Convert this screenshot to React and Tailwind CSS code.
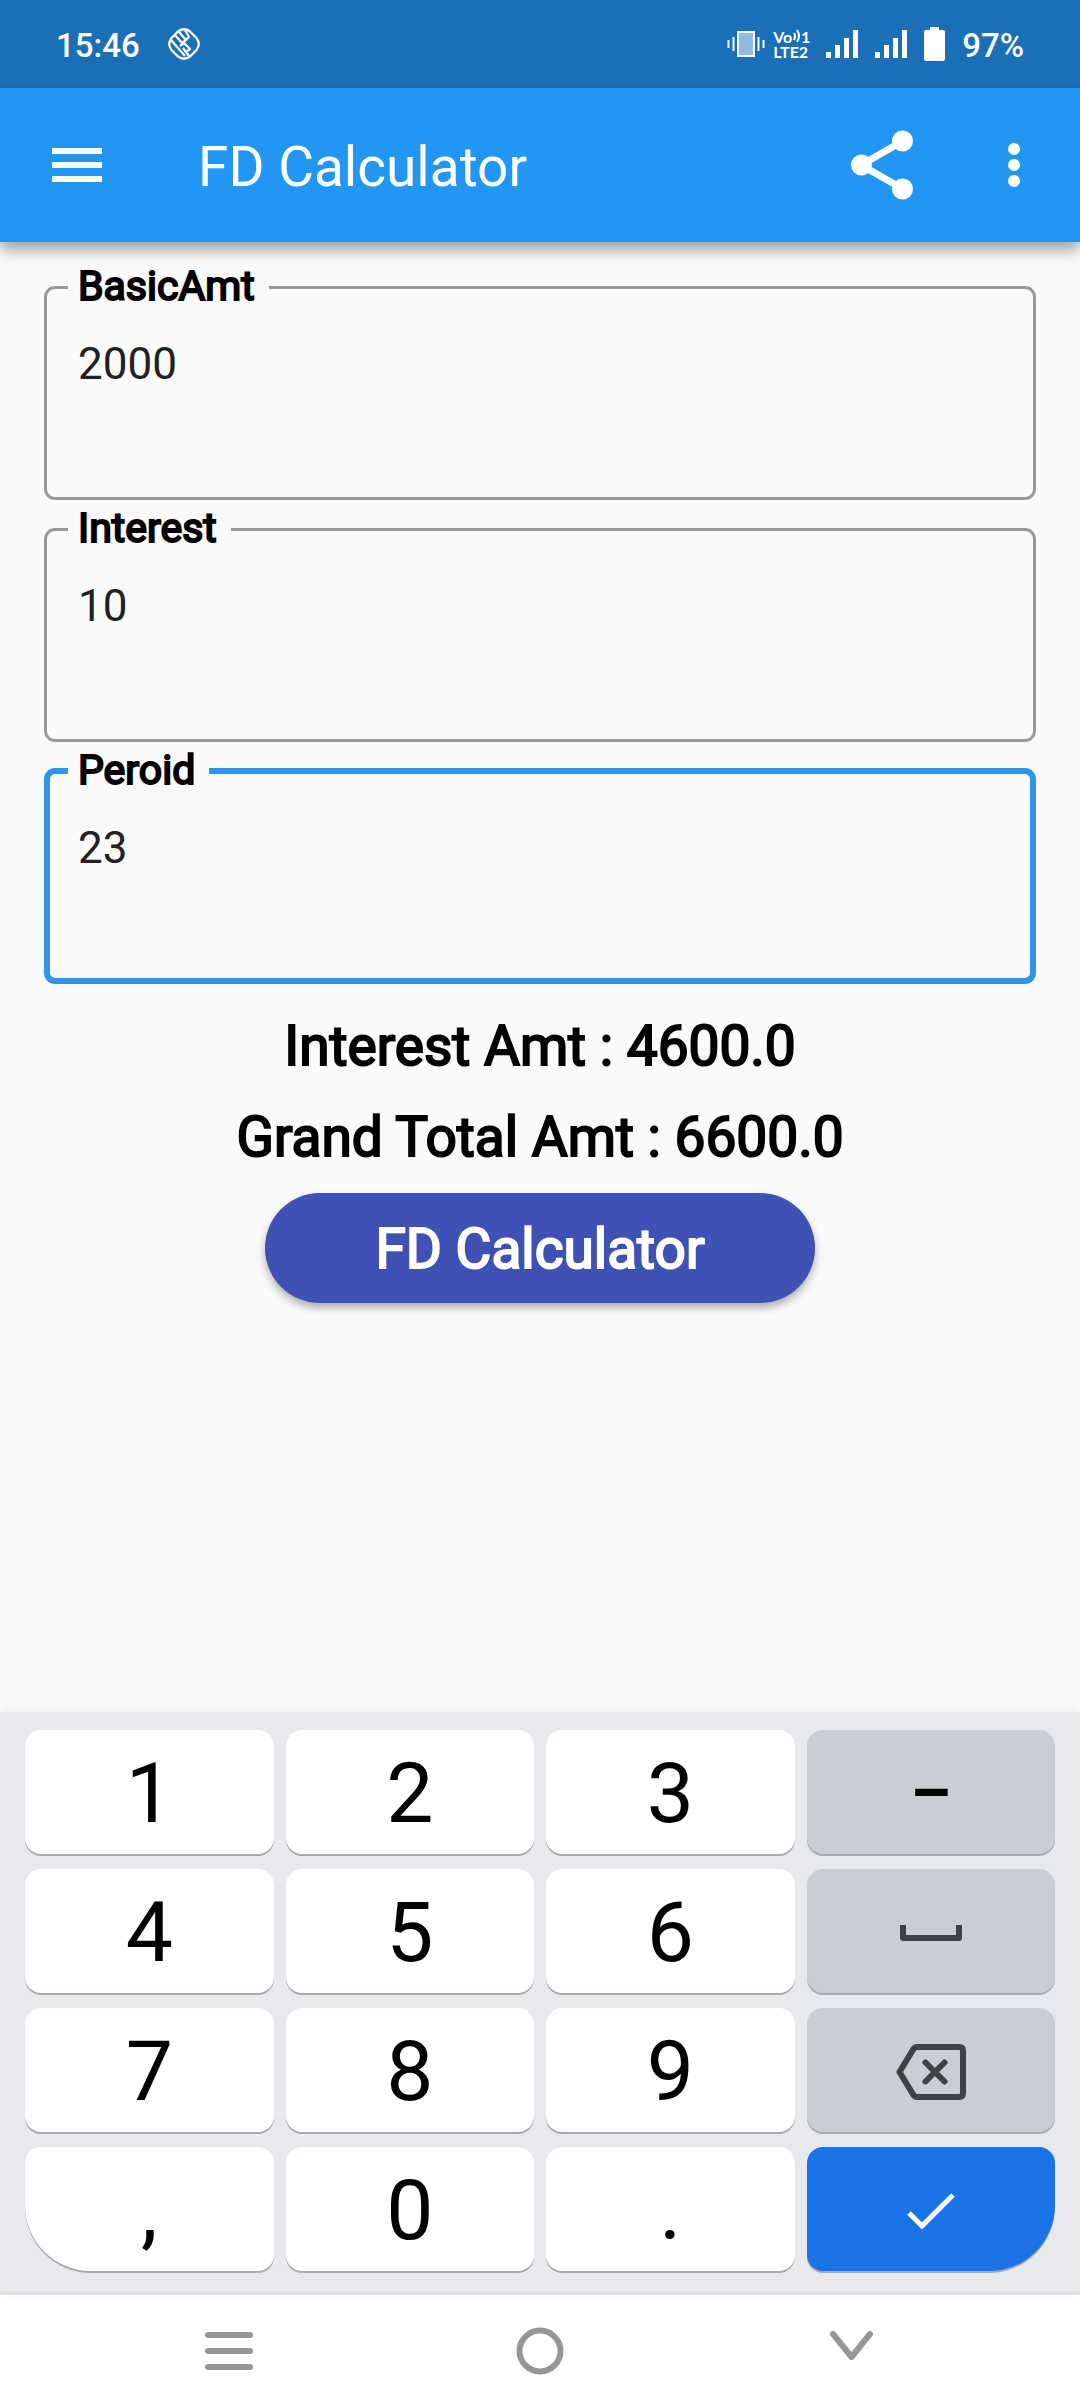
const strokeText = "[-webkit-text-stroke:2px_currentColor]";

function StatusBar() {
  return (
    <div className="flex h-[88px] items-center bg-[#1a6fb7] px-14 text-[33px] leading-10 font-medium text-white">
      <span className="pt-[3px]">15:46</span>
      <svg className="ml-7 h-8 w-8" viewBox="0 0 32 32" fill="none" stroke="currentColor" strokeWidth="2.2" strokeLinejoin="round" aria-hidden="true">
        <path d="M10 3.500Q16 -1 22 3.500L28.500 10Q33 16 28.500 22L22 28.500Q16 33 10 28.500L3.500 22Q-1 16 3.500 10Z" />
        <path d="M3 12L17 28M7 7L14 15M11 4L18 12M14 15L18 12L21 9L17 2M12 18L16 15L22 21L18 24L15 20M18 24L21 28" />
      </svg>
      <div className="ml-auto flex items-center">
        <svg className="h-[26px] w-[38px]" viewBox="0 0 38 26" aria-hidden="true">
          <rect x="11" y="1" width="16" height="24" fill="#8fbbe0" stroke="#fff" strokeWidth="2" />
          <path d="M1.500 9v8M6.500 6v14M31.500 6v14M36.500 9v8" stroke="#fff" strokeWidth="2" />
        </svg>
        <span className="ml-2 flex w-[37px] flex-col font-['Lato',sans-serif] text-[16px] leading-[15px] font-bold whitespace-nowrap">
          <span className="flex justify-between">
            <span>Vo</span>
            <svg className="h-[14px] w-2" viewBox="0 0 8 14" fill="none" stroke="currentColor" strokeWidth="2" aria-hidden="true">
              <path d="M1 4Q3 7 1 11M4 1Q8 7 4 13" />
            </svg>
            <span>1</span>
          </span>
          <span>LTE2</span>
        </span>
        <Signal className="ml-4" />
        <Signal className="ml-[17px]" />
        <svg className="ml-[17px] h-[34px] w-[21px]" viewBox="0 0 21 34" fill="currentColor" aria-hidden="true">
          <path d="M6 0h9v3h4q2 0 2 2v27q0 2-2 2H2q-2 0-2-2V5q0-2 2-2h4z" />
        </svg>
        <span className="ml-[17px] pt-[3px]">97%</span>
      </div>
    </div>
  );
}

function Signal({ className }) {
  return (
    <svg className={`h-7 w-8 ${className}`} viewBox="0 0 32 28" fill="currentColor" aria-hidden="true">
      <path d="M0 22h5v6H0zM9 15h5v13H9zM18 8h5v20h-5zM27 0h5v28h-5z" />
    </svg>
  );
}

function AppBar() {
  return (
    <header className="relative flex h-[154px] items-center bg-[#2196f3] pr-[60px] pl-[52px] text-white shadow-[0_8px_14px_rgba(0,0,0,0.36)]">
      <button type="button" aria-label="Open menu">
        <svg className="h-[34px] w-[50px]" viewBox="0 0 50 34" fill="currentColor">
          <path d="M0 0h50v6H0zM0 14h50v6H0zM0 28h50v6H0z" />
        </svg>
      </button>
      <h1 className="ml-24 pt-[3px] text-[55px] leading-[64px]">FD Calculator</h1>
      <button type="button" aria-label="Share" className="ml-auto">
        <svg className="h-[70px] w-[62px]" viewBox="0 0 62 70" fill="currentColor">
          <path d="M52 11L10 35L52 59" fill="none" stroke="currentColor" strokeWidth="7" />
          <circle cx="10.500" cy="35" r="10.500" />
          <circle cx="51.500" cy="11" r="10.500" />
          <circle cx="51.500" cy="59" r="10.500" />
        </svg>
      </button>
      <button type="button" aria-label="More options" className="ml-[95px]">
        <svg className="h-[44px] w-3" viewBox="0 0 12 44" fill="currentColor">
          <circle cx="6" cy="6" r="6" />
          <circle cx="6" cy="22" r="6" />
          <circle cx="6" cy="38" r="6" />
        </svg>
      </button>
    </header>
  );
}

function Field({ id, label, value, focused }) {
  return (
    <fieldset
      className={
        focused
          ? "h-[237px] rounded-[11px] border-[6px] border-[#2f93e8] pl-[18px]"
          : "h-[237px] rounded-[11px] border-[3px] border-[#999999] pl-[21px]"
      }
    >
      <legend className={`pr-[14px] pb-[2px] pl-[10px] text-[41px] leading-[46px] text-black ${strokeText}`}>
        <label htmlFor={id}>{label}</label>
      </legend>
      <textarea
        id={id}
        defaultValue={value}
        inputMode="decimal"
        className="mt-[27px] block h-[120px] w-full resize-none bg-transparent pl-[10px] text-[44px] leading-[52px] text-[#212121] outline-none"
      />
    </fieldset>
  );
}

const plain = "rounded-[16px] bg-white";
const muted = "rounded-[16px] bg-[#cbcdd5]";

function Key({ children, label, className = plain }) {
  return (
    <button
      type="button"
      aria-label={label}
      className={`flex h-[124px] items-center justify-center pt-1 text-[84px] leading-[98px] text-black shadow-[0_2px_0_#a7a9ac] ${className}`}
    >
      {children}
    </button>
  );
}

function Keyboard() {
  return (
    <section aria-label="Keyboard" className="relative grid grid-cols-4 gap-x-3 gap-y-[15px] border-b-[3px] border-[#dfe0e4] bg-[#e8e9ed] px-[25px] pt-[18px] pb-[21px] shadow-[0_-2px_8px_rgba(0,0,0,0.06)]">
      <Key>1</Key>
      <Key>2</Key>
      <Key>3</Key>
      <Key className={muted}>
        <span className="text-[64px] font-bold">–</span>
      </Key>
      <Key>4</Key>
      <Key>5</Key>
      <Key>6</Key>
      <Key className={muted} label="Space">
        <svg className="h-4 w-[62px]" viewBox="0 0 62 16" fill="none" stroke="#3f4144" strokeWidth="6" strokeLinejoin="round">
          <path d="M3 0v13h56V0" />
        </svg>
      </Key>
      <Key>7</Key>
      <Key>8</Key>
      <Key>9</Key>
      <Key className={muted} label="Backspace">
        <svg className="h-14 w-[70px]" viewBox="0 0 70 56" fill="none" stroke="#3f4144" strokeWidth="6">
          <path d="M21 3H63Q67 3 67 7V49Q67 53 63 53H21Q19 53 17.500 51L3.500 28L17.500 5Q19 3 21 3Z" />
          <path d="M29.500 18.500l19 19M48.500 18.500l-19 19" strokeLinecap="round" />
        </svg>
      </Key>
      <Key className="rounded-[16px] rounded-bl-[66px] bg-white">,</Key>
      <Key>0</Key>
      <Key>.</Key>
      <Key className="rounded-[16px] rounded-br-[66px] bg-[#1b73e8]" label="Done">
        <svg className="h-[37px] w-12" viewBox="0 0 48 37" fill="none" stroke="#fff" strokeWidth="5">
          <path d="M2 20L15 33L46 2" />
        </svg>
      </Key>
    </section>
  );
}

function NavBar() {
  return (
    <nav className="grid h-[113px] grid-cols-3 items-start bg-white px-[73px] pt-8 text-[#969696]">
      <button type="button" aria-label="Recent apps" className="flex h-12 items-center justify-center">
        <svg className="h-[38px] w-12" viewBox="0 0 48 38" stroke="currentColor" strokeWidth="6" strokeLinecap="round">
          <path d="M3 3h42M3 19h42M3 35h42" />
        </svg>
      </button>
      <button type="button" aria-label="Home" className="flex h-12 items-center justify-center">
        <svg className="h-12 w-12" viewBox="0 0 48 48" fill="none" stroke="currentColor" strokeWidth="6">
          <circle cx="24" cy="24" r="20.500" />
        </svg>
      </button>
      <button type="button" aria-label="Hide keyboard" className="flex h-9 items-center justify-center">
        <svg className="h-[29px] w-[43px]" viewBox="0 0 43 29" fill="none" stroke="currentColor" strokeWidth="6" strokeLinecap="round" strokeLinejoin="round">
          <path d="M3 3L21.500 26L40 3" />
        </svg>
      </button>
    </nav>
  );
}

export default function App() {
  return (
    <div className="flex min-h-screen flex-col bg-[#fafafa] font-['Roboto',sans-serif]">
      <StatusBar />
      <AppBar />
      <main className="flex grow flex-col px-11 pt-[21px] text-black">
        <div className="flex flex-col gap-[5px]">
          <Field id="basic" label="BasicAmt" value="2000" />
          <Field id="interest" label="Interest" value="10" />
          <Field id="period" label="Peroid" value="23" focused />
        </div>
        <p className={`mt-[30px] text-center text-[55px] leading-[64px] ${strokeText}`}>Interest Amt : 4600.0</p>
        <p className={`mt-[27px] text-center text-[55px] leading-[64px] ${strokeText}`}>Grand Total Amt : 6600.0</p>
        <button
          type="button"
          className={`mt-6 h-[110px] w-[550px] self-center rounded-full bg-[#3f51b5] pt-[2px] text-[55px] leading-[64px] text-white shadow-[0_5px_8px_rgba(0,0,0,0.3)] ${strokeText}`}
        >
          FD Calculator
        </button>
      </main>
      <Keyboard />
      <NavBar />
    </div>
  );
}
